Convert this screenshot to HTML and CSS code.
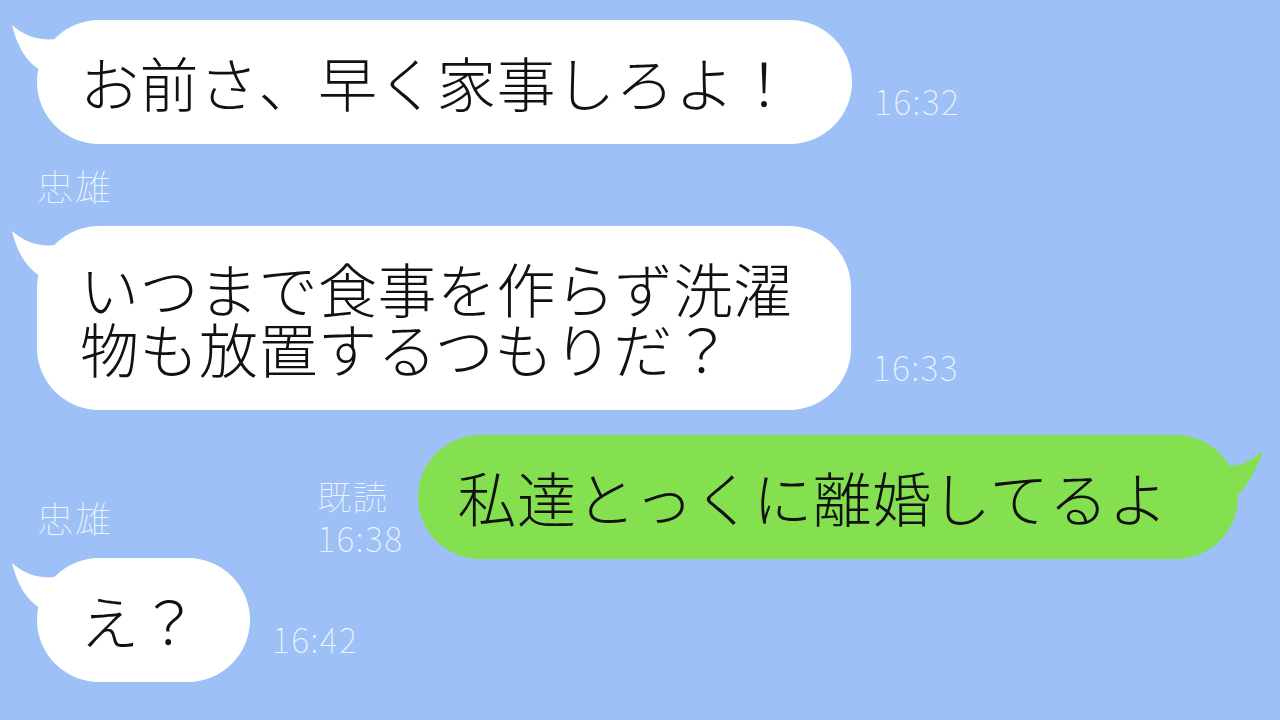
FILE: index.html
```html
<!DOCTYPE html>
<html lang="ja">
<head>
    <meta charset="UTF-8">
    <meta name="viewport" content="width=device-width, initial-scale=1.0">
    <title>トーク</title>
    <link rel="stylesheet" href="styles.css">
</head>
<body>
    <div class="chat">
        <div class="row">
            <div class="bubble">
                <svg class="tail" viewBox="-30 0 60 60" width="60" height="60"><path d="M-25 5 Q-6 22 20 19 L26 45 L3 50 Q-17 38 -25 5 Z"/></svg>
                <p class="text">お前さ、早く家事しろよ！</p>
            </div>
            <div class="time">16:32</div>
        </div>

        <div class="name first">忠雄</div>

        <div class="row">
            <div class="bubble">
                <svg class="tail" viewBox="-30 0 60 60" width="60" height="60"><path d="M-25 5 Q-6 22 20 19 L26 45 L3 50 Q-17 38 -25 5 Z"/></svg>
                <p class="text">いつまで食事を作らず洗濯</p>
                <p class="text">物も放置するつもりだ？</p>
            </div>
            <div class="time">16:33</div>
        </div>

        <div class="row mixed">
            <div class="name">忠雄</div>
            <div class="sent">
                <div class="read">
                    <div>既読</div>
                    <div>16:38</div>
                </div>
                <div class="bubble green">
                    <svg class="tail" viewBox="-30 0 60 60" width="60" height="60"><path d="M25 16 Q6 32 -10 31 L-14 58 L2 58 Q16 42 25 16 Z"/></svg>
                    <p class="text">私達とっくに離婚してるよ</p>
                </div>
            </div>
        </div>

        <div class="row">
            <div class="bubble short">
                <svg class="tail" viewBox="-30 0 60 60" width="60" height="60"><path d="M-25 5 Q-6 22 20 19 L26 45 L3 50 Q-17 38 -25 5 Z"/></svg>
                <p class="text">え？</p>
            </div>
            <div class="time">16:42</div>
        </div>
    </div>
</body>
</html>
```

FILE: styles.css
```css
body {
    margin: 0;
    padding: 0;
    background: #9dc0f6;
    font-family: "Noto Sans CJK JP", "Noto Sans", sans-serif;
    width: 1280px;
    height: 720px;
    overflow: hidden;
}

.chat {
    padding-top: 20px;
}

.row {
    display: flex;
    align-items: flex-end;
    gap: 22px;
    padding-left: 37px;
}

.bubble {
    position: relative;
    background: #fff;
    color: #111;
    border-radius: 62px;
    padding: 32px 58px 32px 43px;
    font-size: 59px;
    letter-spacing: 0.5px;
    font-weight: 300;
}

.bubble.short {
    padding-right: 51px;
}

.text {
    position: relative;
    z-index: 1;
    margin: 0;
    height: 60px;
    line-height: 60px;
    white-space: nowrap;
}

.tail {
    position: absolute;
    left: -30px;
    top: 0;
    fill: #fff;
}

.time {
    color: #eef4fd;
    font-size: 34px;
    line-height: 34px;
    font-weight: 100;
    letter-spacing: 1.5px;
    margin-bottom: 26px;
}

.name {
    color: #eef4fd;
    font-size: 36px;
    line-height: 36px;
    font-weight: 100;
    letter-spacing: 2px;
    padding-left: 37px;
}

.name.first {
    margin: 23px 0;
}

.row.mixed {
    justify-content: space-between;
    padding-left: 0;
    margin-top: 25px;
    margin-bottom: -1px;
}

.row.mixed .name {
    margin-bottom: 24px;
}

.sent {
    display: flex;
    align-items: flex-end;
    gap: 14px;
    margin-right: 42px;
}

.read {
    display: flex;
    flex-direction: column;
    gap: 8px;
    color: #eef4fd;
    font-size: 34px;
    line-height: 34px;
    font-weight: 100;
    letter-spacing: 1.5px;
    margin-bottom: 4px;
}

.bubble.green {
    background: #85e04f;
    padding: 32px 70px 32px 40px;
}

.bubble.green .tail {
    left: auto;
    right: -30px;
    fill: #85e04f;
}
```
